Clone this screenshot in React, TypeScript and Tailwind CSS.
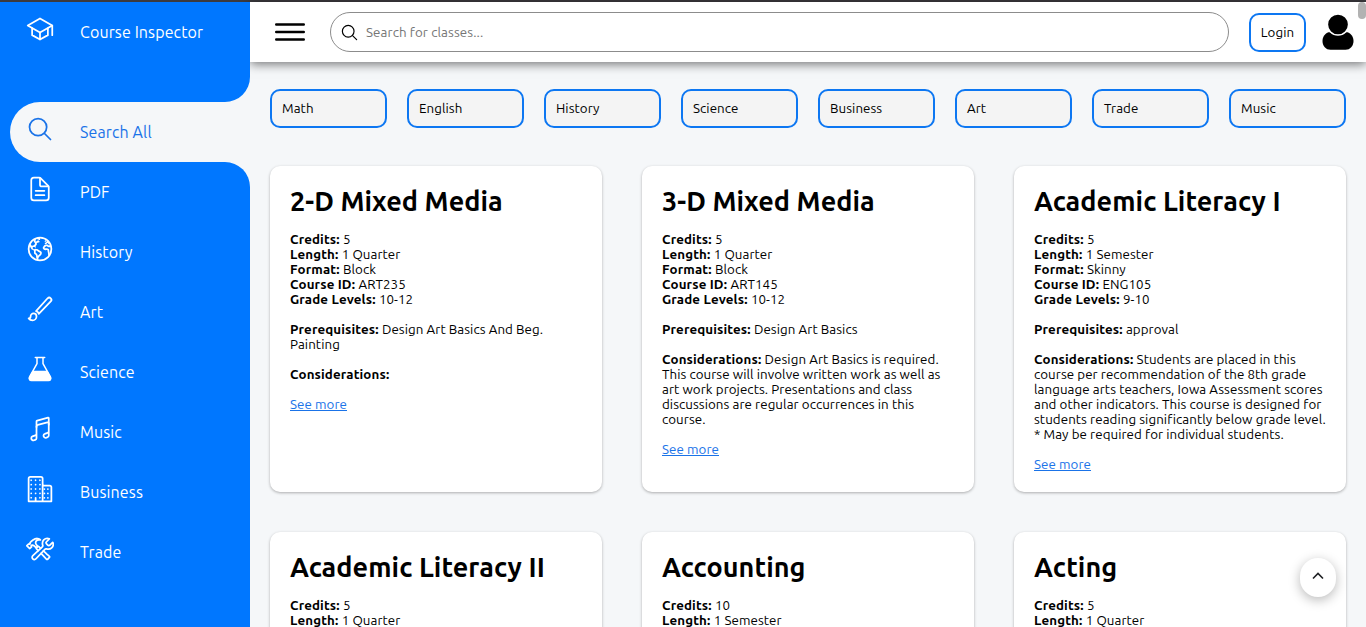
import type { ReactNode } from "react";
import {
  IoSchoolOutline,
  IoSearchOutline,
  IoDocumentTextOutline,
  IoEarthOutline,
  IoBrushOutline,
  IoMusicalNotesOutline,
  IoBusinessOutline,
  IoConstructOutline,
} from "react-icons/io5";

function FlaskIcon() {
  return (
    <svg viewBox="0 0 28 28" className="size-7" fill="none" stroke="currentColor" strokeWidth="1.5" strokeLinejoin="round" strokeLinecap="round">
      <path d="M9.300 2.500h9.400M11 2.500v6.200L3.600 21.900c-.9 1.700 0 3.500 1.900 3.500h17c1.900 0 2.800-1.800 1.900-3.500L17 8.700V2.500" />
      <path d="M6.900 16.600h14.200l3.200 5.700c.6 1.500-.1 2.900-1.700 2.900H5.400c-1.600 0-2.300-1.400-1.700-2.900z" fill="currentColor" />
    </svg>
  );
}

function PersonIcon() {
  return (
    <svg viewBox="0 0 32 37" className="h-[37px] w-8" fill="currentColor">
      <path d="M6.500 18.300C3 19.500.5 23 .5 27c0 5 3.400 8.800 8 8.800h15c4.600 0 8-3.800 8-8.800 0-4-2.500-7.500-6-8.700z" />
      <circle cx="16" cy="10.500" r="10.600" stroke="#fff" strokeWidth="1.500" />
    </svg>
  );
}

const items: { label: string; icon: ReactNode }[] = [
  { label: "PDF", icon: <IoDocumentTextOutline size={28} /> },
  { label: "History", icon: <IoEarthOutline size={28} /> },
  { label: "Art", icon: <IoBrushOutline size={28} /> },
  { label: "Science", icon: <FlaskIcon /> },
  { label: "Music", icon: <IoMusicalNotesOutline size={28} /> },
  { label: "Business", icon: <IoBusinessOutline size={28} /> },
  { label: "Trade", icon: <IoConstructOutline size={28} /> },
];

const subjects = ["Math", "English", "History", "Science", "Business", "Art", "Trade", "Music"];

type Details = {
  format: string;
  id: string;
  grades: string;
  prerequisites: string[];
  considerations: string[];
};

type Course = { title: string; credits: string; length: string; details?: Details };

const courses: Course[] = [
  {
    title: "2-D Mixed Media",
    credits: "5",
    length: "1 Quarter",
    details: {
      format: "Block",
      id: "ART235",
      grades: "10-12",
      prerequisites: ["Design Art Basics And Beg.", "Painting"],
      considerations: [""],
    },
  },
  {
    title: "3-D Mixed Media",
    credits: "5",
    length: "1 Quarter",
    details: {
      format: "Block",
      id: "ART145",
      grades: "10-12",
      prerequisites: ["Design Art Basics"],
      considerations: [
        "Design Art Basics is required.",
        "This course will involve written work as well as",
        "art work projects. Presentations and class",
        "discussions are regular occurrences in this",
        "course.",
      ],
    },
  },
  {
    title: "Academic Literacy I",
    credits: "5",
    length: "1 Semester",
    details: {
      format: "Skinny",
      id: "ENG105",
      grades: "9-10",
      prerequisites: ["approval"],
      considerations: [
        "Students are placed in this",
        "course per recommendation of the 8th grade",
        "language arts teachers, Iowa Assessment scores",
        "and other indicators. This course is designed for",
        "students reading significantly below grade level.",
        "* May be required for individual students.",
      ],
    },
  },
  { title: "Academic Literacy II", credits: "5", length: "1 Quarter" },
  { title: "Accounting", credits: "10", length: "1 Semester" },
  { title: "Acting", credits: "5", length: "1 Quarter" },
];

function NavRow({ icon, label }: { icon: ReactNode; label: string }) {
  return (
    <div className="flex h-[60px] shrink-0 items-center pl-[26px]">
      <span className="-mt-1.5 flex w-[54px]">{icon}</span>
      <span className="text-[16px] leading-5 tracking-[0.12px]">{label}</span>
    </div>
  );
}

function Field({ label, lines }: { label: string; lines: string[] }) {
  return (
    <>
      {lines.map((line, i) => (
        <p key={i}>
          {i === 0 && <b className="tracking-[0.13px]">{label}: </b>}
          {line}
        </p>
      ))}
    </>
  );
}

function CourseCard({ course }: { course: Course }) {
  const { details } = course;
  return (
    <article className="h-[326px] rounded-[10px] bg-white px-5 pt-[15px] shadow-[0_1px_3px_rgba(0,0,0,0.3)]">
      <h2 className="h-10 text-[27px] leading-10 font-bold tracking-[0.07px] whitespace-nowrap">{course.title}</h2>
      <div className="mt-[11px] text-[13.333px] leading-[15px] tracking-[0.07px] whitespace-nowrap">
        <Field label="Credits" lines={[course.credits]} />
        <Field label="Length" lines={[course.length]} />
        {details && (
          <>
            <Field label="Format" lines={[details.format]} />
            <Field label="Course ID" lines={[details.id]} />
            <Field label="Grade Levels" lines={[details.grades]} />
            <div className="mt-[15px]">
              <Field label="Prerequisites" lines={details.prerequisites} />
            </div>
            <div className="mt-[15px]">
              <Field label="Considerations" lines={details.considerations} />
            </div>
            <a className="mt-[15px] block text-[#1a73e8] underline">See more</a>
          </>
        )}
      </div>
    </article>
  );
}

export default function App() {
  return (
    <div className="relative flex h-[627px] w-[1366px] flex-col overflow-hidden bg-[#f5f7f9] font-['Ubuntu','Noto_Sans',sans-serif] text-black">
      <div className="h-0.5 shrink-0 bg-[#3c3a3e]" />
      <div className="flex min-h-0 flex-1">
        <aside className="z-10 flex w-[250px] shrink-0 flex-col bg-[#f5f7f9] text-white">
          <div className="h-[100px] shrink-0 rounded-br-[25px] bg-[#0077ff]">
            <NavRow icon={<IoSchoolOutline size={28} />} label="Course Inspector" />
          </div>
          <div className="shrink-0 bg-linear-to-r from-[#0077ff] from-50% to-[#f5f7f9] to-50% pl-[10px]">
            <div className="rounded-l-[30px] bg-[#f5f7f9] text-[#1a73e8]">
              <div className="-ml-[10px]">
                <NavRow icon={<IoSearchOutline size={28} />} label="Search All" />
              </div>
            </div>
          </div>
          <nav className="flex-1 rounded-tr-[25px] bg-[#0077ff]">
            {items.map((item) => (
              <NavRow key={item.label} icon={item.icon} label={item.label} />
            ))}
          </nav>
        </aside>

        <div className="flex min-w-0 flex-1 flex-col">
          <header className="flex h-[60px] shrink-0 items-center bg-white pl-[25px] shadow-[0_2px_10px_rgba(0,0,0,0.55)]">
            <svg viewBox="0 0 30 18" className="h-[18px] w-[30px]" fill="none" stroke="#000" strokeWidth="2.400" strokeLinecap="round">
              <path d="M1.200 1.500h27.600M1.200 9h27.600M1.200 16.500h27.600" />
            </svg>
            <div className="ml-[25px] flex h-10 w-[899px] items-center rounded-full border border-[#8c8c8c] pl-[9px]">
              <IoSearchOutline size={19} />
              <span className="ml-[7px] pt-px text-[13.333px] tracking-[0.1px] text-[#757575]">Search for classes...</span>
            </div>
            <div className="ml-5 flex h-[39px] w-[57px] items-center justify-center rounded-[10px] border-2 border-[#0d77f2] pt-px text-[13.333px] tracking-[0.07px]">
              Login
            </div>
            <div className="ml-[15.5px]">
              <PersonIcon />
            </div>
          </header>

          <main className="px-5 pt-[27px]">
            <div className="grid grid-cols-8 gap-5">
              {subjects.map((s) => (
                <div key={s} className="flex h-[39px] items-center rounded-[10px] border-2 border-[#0d77f2] bg-[#f4f4f4] pl-[10px] text-[13.333px] tracking-[0.07px]">
                  {s}
                </div>
              ))}
            </div>
            <div className="mt-[38px] grid grid-cols-3 gap-10">
              {courses.map((c) => (
                <CourseCard key={c.title} course={c} />
              ))}
            </div>
          </main>
        </div>
      </div>

      <div className="absolute top-0.5 right-0 z-20 h-[17px] w-2 rounded-full bg-[#b2b2b2]" />
      <div className="absolute top-[558px] left-[1300px] z-20 flex h-[39px] w-[36px] items-center justify-center rounded-full bg-white shadow-[0_3px_12px_rgba(0,0,0,0.28)]">
        <svg viewBox="0 0 12 8" className="-mt-[3px] h-2 w-3" fill="none" stroke="#202124" strokeWidth="1.600">
          <path d="M1 6.500l5-5 5 5" />
        </svg>
      </div>
    </div>
  );
}
